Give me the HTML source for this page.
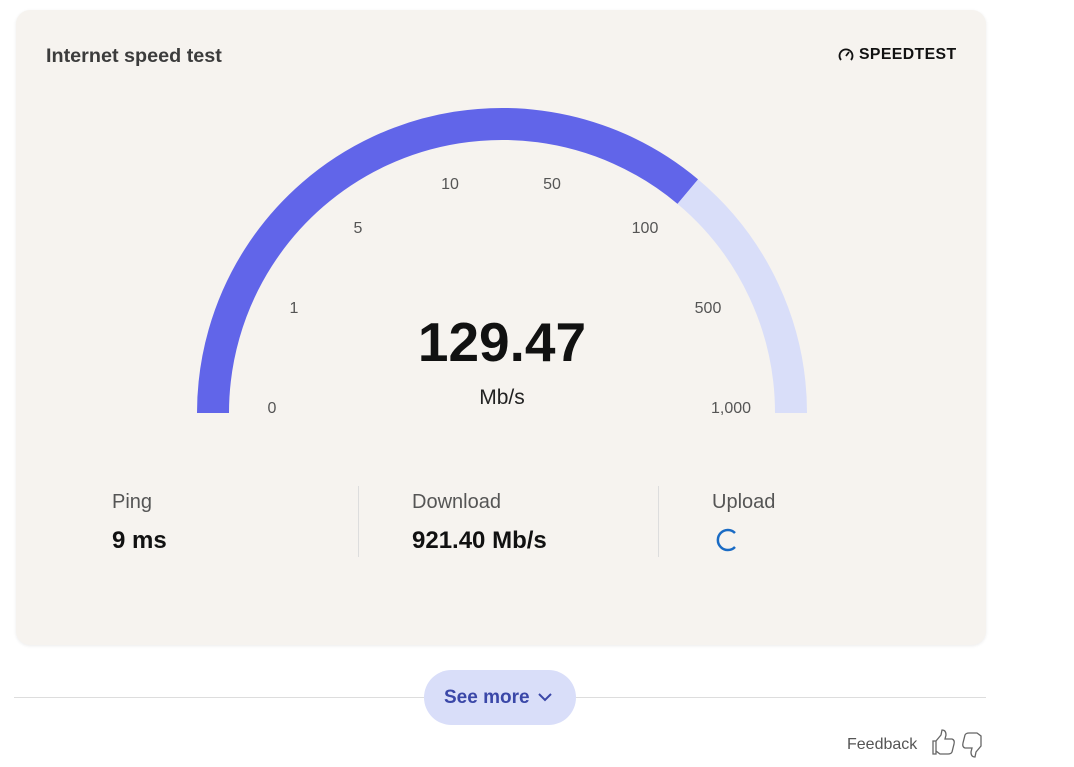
<!DOCTYPE html>
<html><head><meta charset="utf-8"><style>
body{margin:0;width:1074px;height:767px;background:#fff;font-family:"Liberation Sans",Arial,sans-serif;position:relative;overflow:hidden}
.card{position:absolute;left:16px;top:10px;width:970px;height:635px;background:#f6f3ef;border-radius:14px;box-shadow:0 1px 3px rgba(0,0,0,.08)}
.t{position:absolute;font-family:"Liberation Sans",Arial,sans-serif}
</style></head><body>
<div class="card"></div>
<div class="t" style="left:46px;top:45px;font-size:19.8px;font-weight:bold;color:#3c3c3c">Internet speed test</div>
<svg class="t" style="left:838px;top:47px" width="16" height="16" viewBox="0 0 16 16"><path d="M3 13 A6.5 6.5 0 1 1 13 13" fill="none" stroke="#111" stroke-width="1.8"/><path d="M8 9 L11 5" stroke="#111" stroke-width="1.8"/></svg>
<div class="t" style="left:859px;top:46px;font-size:15.8px;font-weight:bold;color:#111;letter-spacing:0.4px">SPEEDTEST</div>
<svg class="t" style="left:0;top:0" width="1074" height="767">
<path d="M213 413 A289 289 0 0 1 687.8 191.6" fill="none" stroke="#6165e9" stroke-width="32"/>
<path d="M687.8 191.6 A289 289 0 0 1 791 413" fill="none" stroke="#d9def9" stroke-width="32"/>
<g font-family="Liberation Sans,Arial,sans-serif" font-size="16" fill="#555" text-anchor="middle">
<text x="272" y="413">0</text><text x="294" y="313">1</text><text x="358" y="233">5</text>
<text x="450" y="189">10</text><text x="552" y="189">50</text><text x="645" y="233">100</text>
<text x="708" y="313">500</text><text x="731" y="413">1,000</text>
</g>
<text x="502" y="361" text-anchor="middle" font-family="Liberation Sans,Arial,sans-serif" font-size="55" font-weight="bold" fill="#111">129.47</text>
<text x="502" y="404" text-anchor="middle" font-family="Liberation Sans,Arial,sans-serif" font-size="21" fill="#222">Mb/s</text>
<line x1="358.5" y1="486" x2="358.5" y2="557" stroke="#ddd"/>
<line x1="658.5" y1="486" x2="658.5" y2="557" stroke="#ddd"/>
<path d="M735 533 A10 10 0 1 0 735 547" fill="none" stroke="#1a6bc4" stroke-width="2.5"/>
<line x1="14" y1="697.5" x2="986" y2="697.5" stroke="#ddd"/>
<rect x="424" y="670" width="152" height="55" rx="27.5" fill="#d9def9"/>
<path d="M539 694 L545 700 L551 694" fill="none" stroke="#3a47a8" stroke-width="2"/>
<path d="M936 751 L936 741 L941 735 L942 730 Q946 730 946 735 L945 739 L952 739 Q955 740 954 744 L952 752 Q951 754 948 754 L940 754 Z M933 741 L936 741 L936 754 L933 754 Z" fill="none" stroke="#666" stroke-width="1.3"/>
<path d="M981 736 L981 746 L976 752 L975 757 Q971 757 971 752 L972 748 L965 748 Q962 747 963 743 L965 735 Q966 733 969 733 L977 733 Z" fill="none" stroke="#666" stroke-width="1.3"/>
</svg>
<div class="t" style="left:112px;top:491px;font-size:20px;color:#555">Ping</div>
<div class="t" style="left:112px;top:527px;font-size:24px;font-weight:bold;color:#111">9 ms</div>
<div class="t" style="left:412px;top:491px;font-size:20px;color:#555">Download</div>
<div class="t" style="left:412px;top:527px;font-size:24px;font-weight:bold;color:#111">921.40 Mb/s</div>
<div class="t" style="left:712px;top:491px;font-size:20px;color:#555">Upload</div>
<div class="t" style="left:444px;top:687px;font-size:19px;font-weight:bold;color:#3a47a8">See more</div>
<div class="t" style="left:847px;top:736px;font-size:16px;color:#555">Feedback</div>
</body></html>
